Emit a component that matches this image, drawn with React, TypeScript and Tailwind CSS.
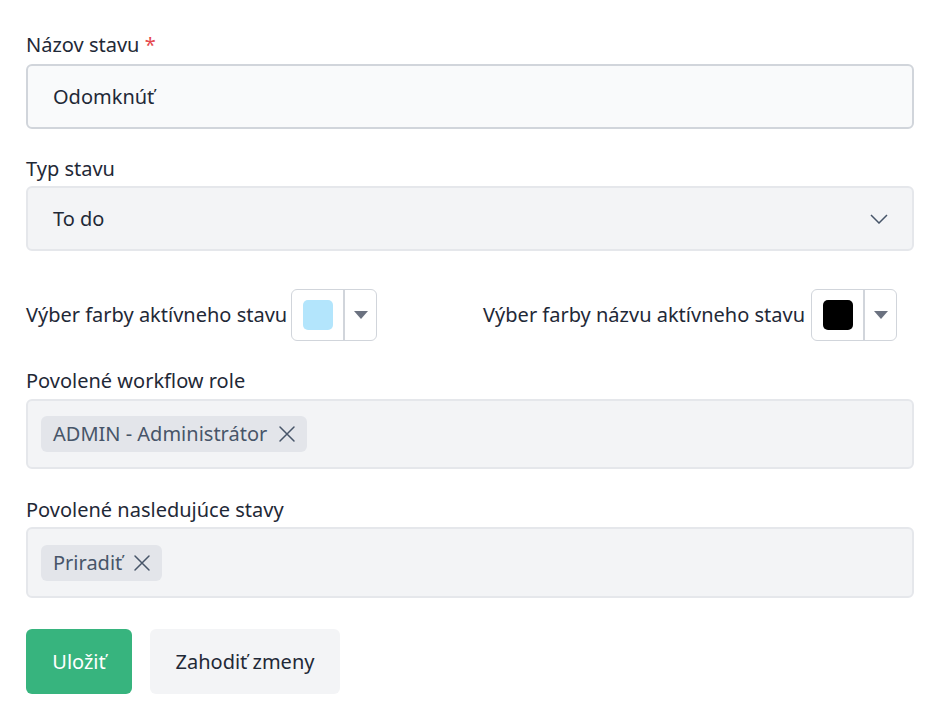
import React from "react";

function Chip({ label }: { label: string }) {
  return (
    <span className="inline-flex items-center h-[36px] rounded-[6px] bg-[#e3e5ea] pl-[12px] pr-[11px] text-[#475569]">
      <span>{label}</span>
      <svg width="18" height="18" viewBox="0 0 18 18" className="ml-[11px]" fill="none" stroke="#475569" strokeWidth="1.5" strokeLinecap="round">
        <path d="M2 2 L16 16 M16 2 L2 16" />
      </svg>
    </span>
  );
}

function ColorPicker({ color }: { color: string }) {
  return (
    <div className="flex h-[52px] w-[86px] items-stretch rounded-[6px] border border-[#d1d5db] bg-white">
      <div className="flex w-[53px] items-center justify-center border-r-2 border-[#d1d5db]">
        <div className="h-[30px] w-[30px] rounded-[5px]" style={{ backgroundColor: color }} />
      </div>
      <div className="flex flex-1 items-center justify-center">
        <svg width="14" height="8" viewBox="0 0 14 8">
          <path d="M0 0 L14 0 L7 8 Z" fill="#6b7280" />
        </svg>
      </div>
    </div>
  );
}

export default function App() {
  return (
    <div
      className="min-h-[705px] w-[937px] bg-white text-[20px] text-[#1f2937]"
      style={{ fontFamily: '"Noto Sans", "Open Sans", sans-serif' }}
    >
      <div className="ml-[26px] w-[888px] pt-[31px]">
        <div className="mb-[5px] h-[28px] leading-[28px]">
          Názov stavu <span className="text-[#e5484d]">*</span>
        </div>
        <div className="flex h-[65px] items-center rounded-[6px] border-2 border-[#d1d5db] bg-[#f9fafb] pl-[25px]">
          Odomknúť
        </div>

        <div className="mb-[3px] mt-[26px] h-[28px] leading-[28px]">Typ stavu</div>
        <div className="flex h-[65px] items-center justify-between rounded-[6px] border-2 border-[#e5e7eb] bg-[#f3f4f6] pl-[25px] pr-[24px]">
          <span>To do</span>
          <svg width="18" height="10" viewBox="0 0 18 10" fill="none" stroke="#475569" strokeWidth="1.5">
            <path d="M1 1 L9 9 L17 1" />
          </svg>
        </div>

        <div className="mt-[38px] flex h-[52px] items-center justify-between pr-[17px]">
          <div className="flex items-center gap-[4px]">
            <span>Výber farby aktívneho stavu</span>
            <ColorPicker color="#b3e5fc" />
          </div>
          <div className="flex items-center gap-[6px]">
            <span>Výber farby názvu aktívneho stavu</span>
            <ColorPicker color="#000000" />
          </div>
        </div>

        <div className="mb-[4px] mt-[26px] h-[28px] leading-[28px]">Povolené workflow role</div>
        <div className="flex h-[70px] items-center rounded-[6px] border-2 border-[#e5e7eb] bg-[#f3f4f6] pl-[13px]">
          <Chip label="ADMIN - Administrátor" />
        </div>

        <div className="mb-[3px] mt-[27px] h-[28px] leading-[28px]">Povolené nasledujúce stavy</div>
        <div className="flex h-[71px] items-center rounded-[6px] border-2 border-[#e5e7eb] bg-[#f3f4f6] pl-[13px]">
          <Chip label="Priradiť" />
        </div>

        <div className="mt-[31px] flex gap-[18px]">
          <button className="h-[65px] w-[106px] rounded-[6px] bg-[#37b47e] text-white">Uložiť</button>
          <button className="h-[65px] w-[190px] rounded-[6px] bg-[#f3f4f6] text-[#1f2937]">Zahodiť zmeny</button>
        </div>
      </div>
    </div>
  );
}
